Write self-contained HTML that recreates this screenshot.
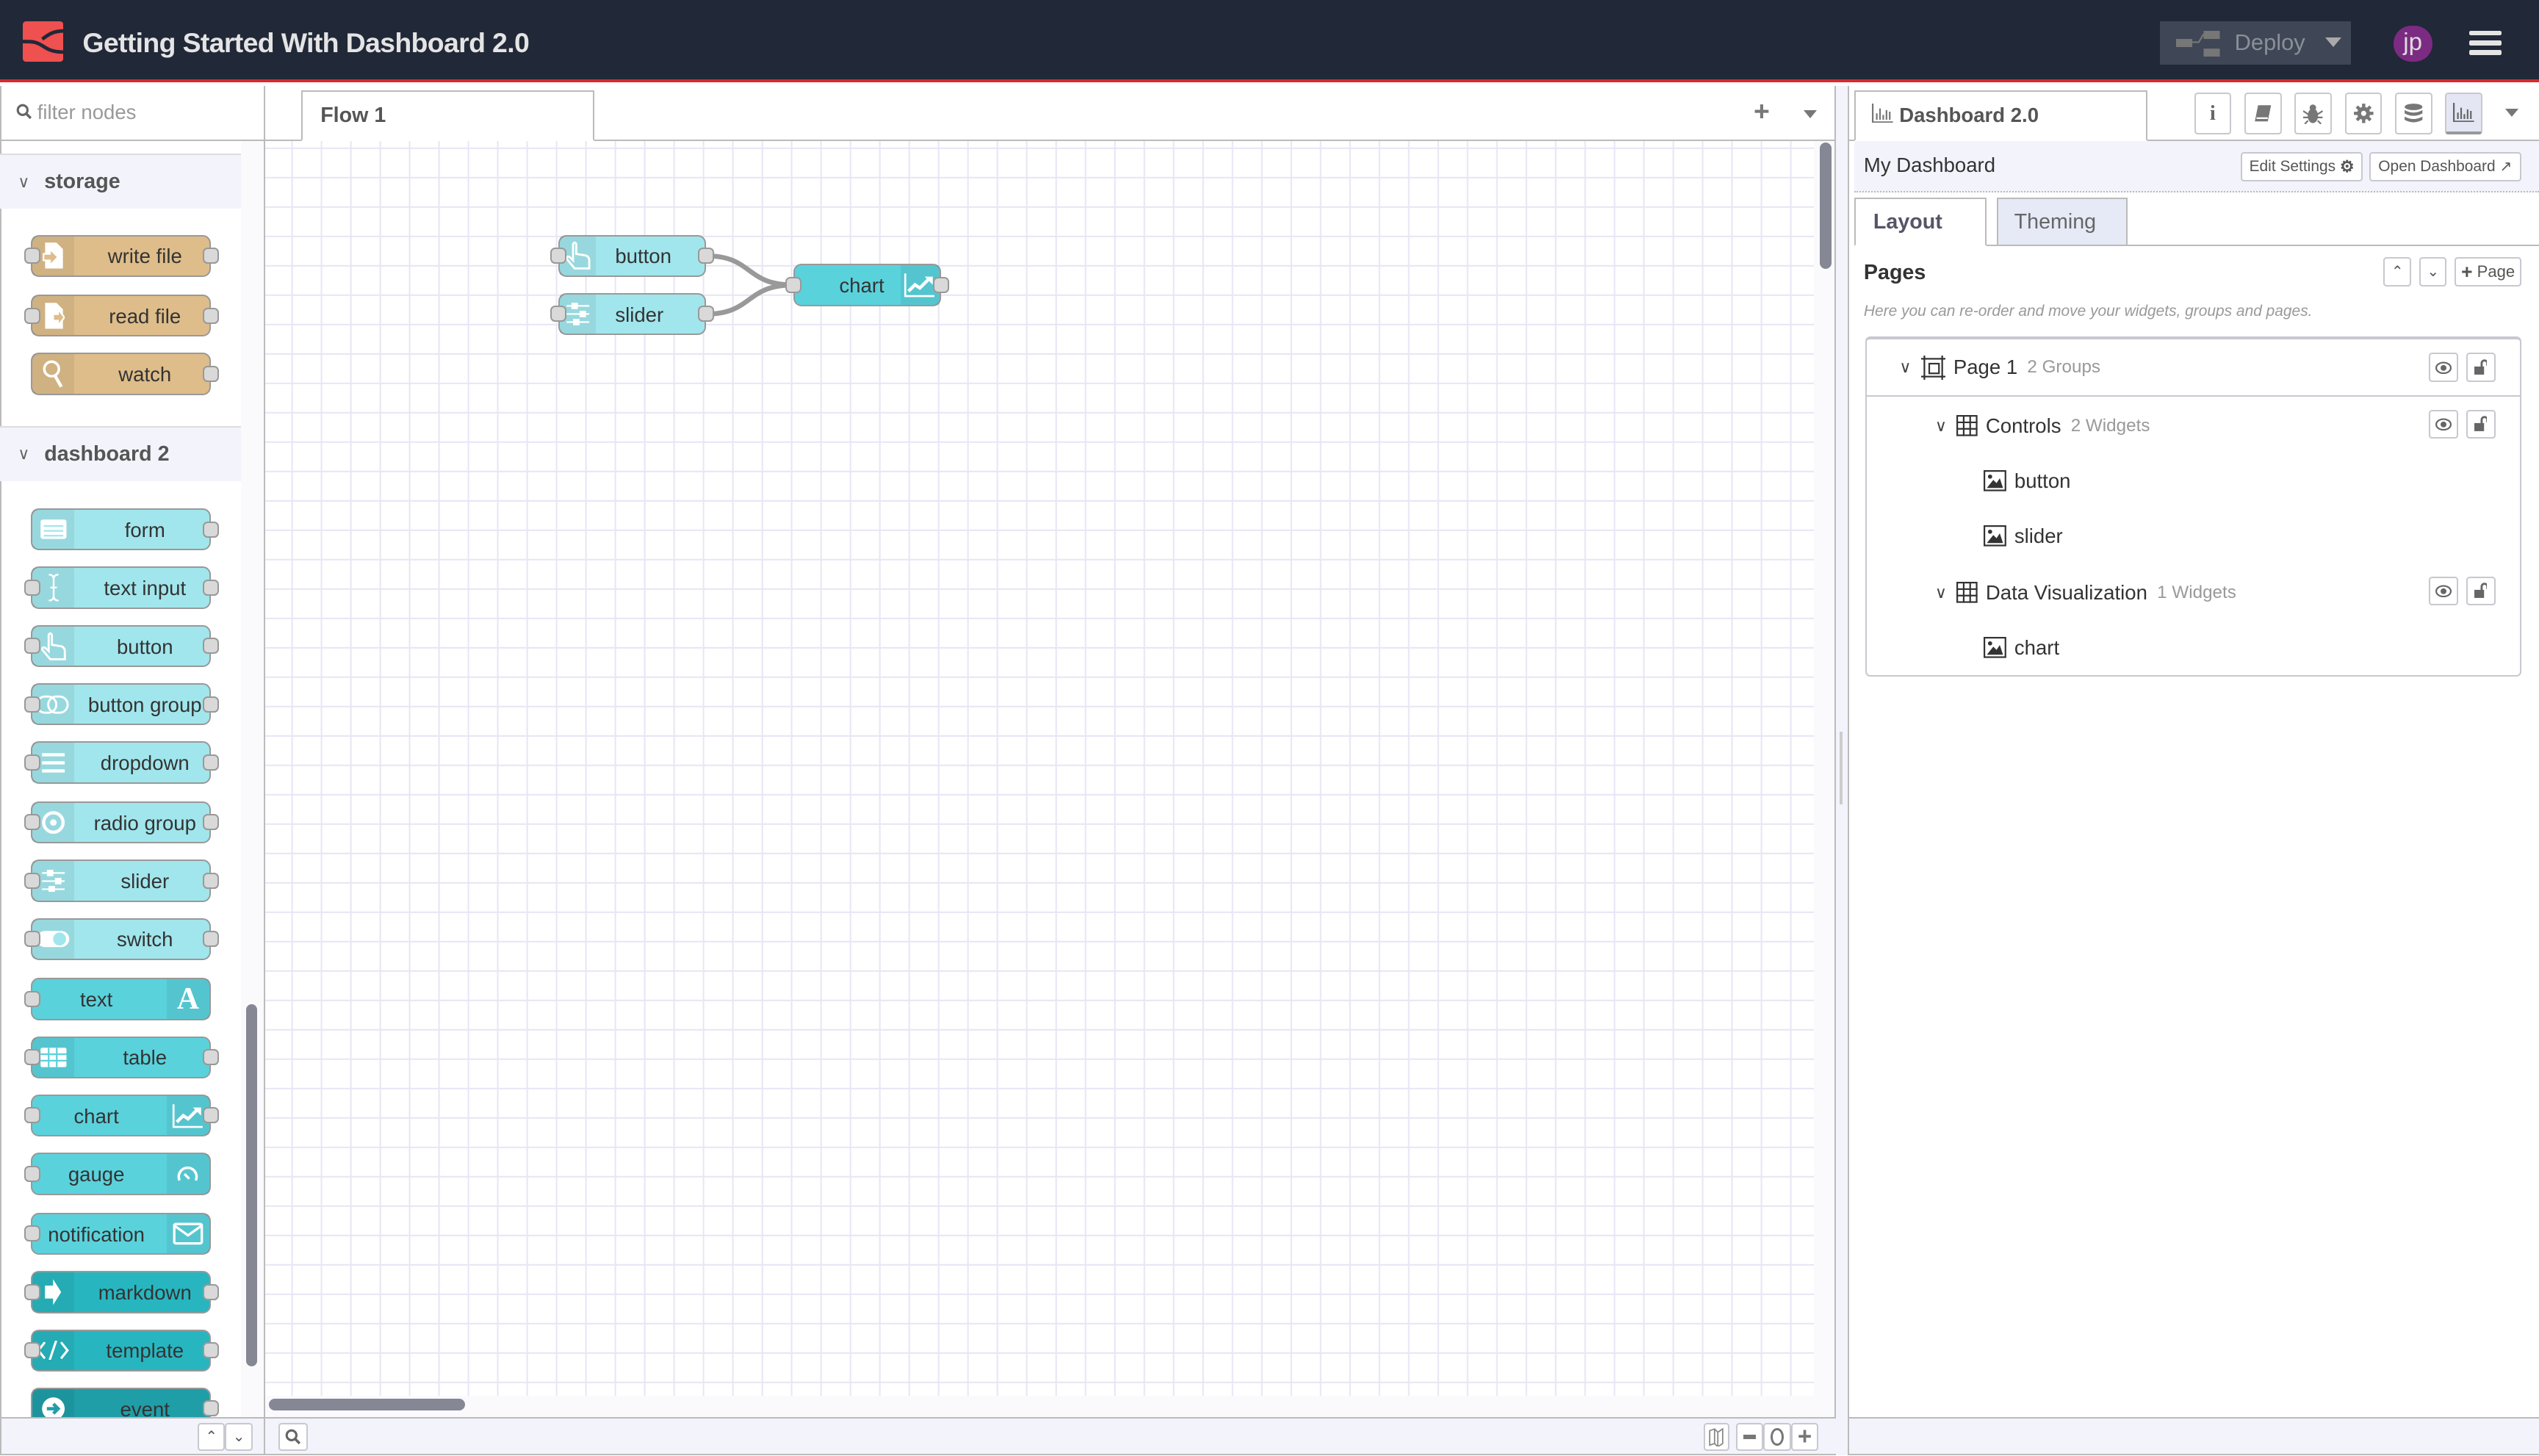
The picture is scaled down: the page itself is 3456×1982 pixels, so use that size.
<!DOCTYPE html>
<html><head><meta charset="utf-8"><style>
*{box-sizing:border-box;margin:0;padding:0}
html,body{width:3456px;height:1982px;overflow:hidden;background:#fff}
#w{zoom:2.2041;width:1568px;height:899px;position:relative;font-family:"Liberation Sans",Arial,sans-serif;color:#333;overflow:hidden}
.a{position:absolute}
.hdr{left:0;top:0;width:1568px;height:51px;background:#212837;border-bottom:2px solid #d9282e}
.n{position:absolute;width:111px;height:26px;border:1px solid #999;border-radius:5px;font-size:12.5px;color:#333}
.n .ic{position:absolute;top:0;bottom:0;width:26px;background:rgba(0,0,0,0.06);display:flex;align-items:center;justify-content:center}
.n .l{position:absolute;top:1px;bottom:0;display:flex;align-items:center;justify-content:center;white-space:nowrap}
.p{position:absolute;width:10px;height:10px;background:#d9d9d9;border:1px solid #999;border-radius:3px;top:7px}
.s{background:#debd8a}.c1{background:#a1e6ec}.c2{background:#5ad2dc}.c3{background:#27b6c0}.c4{background:#1f9ea7}
.cat{position:absolute;left:0;width:149px;height:34px;background:#f3f3fb;border-top:1px solid #ddd;font-size:13px;font-weight:bold;color:#555;display:flex;align-items:center}
.cat span{font-weight:normal;font-size:10px;margin:0 9px 0 11px;color:#666}
.btn{position:absolute;border:1px solid #c8c8d0;border-radius:2px;background:#fff;display:flex;align-items:center;justify-content:center;font-size:9px;color:#555}
.row{position:absolute;left:0;right:0;display:flex;align-items:center;font-size:12.5px;color:#333}
.gray{color:#999;font-size:11px;margin-left:6px}
.eb{position:absolute;width:18px;height:18px;border:1px solid #c8c8d0;border-radius:2px;display:flex;align-items:center;justify-content:center}
</style></head><body><div id="w">
<!-- header -->
<div class="a hdr"></div>
<svg class="a" style="left:14px;top:13px" width="25" height="25" viewBox="0 0 25 25"><rect width="25" height="25" rx="2" fill="#ef5050"/><path d="M0 12.5 C6 12.5 8 12.5 12 15 C15 17 18 19 25 19 M25 6 C18 6 15 9 12 11" stroke="#212837" stroke-width="2.2" fill="none"/></svg>
<div class="a" style="left:51px;top:17px;font-size:17px;color:#e4e4e4;font-weight:bold;letter-spacing:-0.3px">Getting Started With Dashboard 2.0</div>
<div class="a" style="left:1334px;top:13px;width:118px;height:27px;background:#3f4756"></div>
<svg class="a" style="left:1344px;top:19px" width="28" height="16"><rect x="0" y="5" width="10" height="5" fill="#777"/><rect x="17" y="0" width="10" height="5" fill="#777"/><rect x="17" y="11" width="10" height="5" fill="#777"/><path d="M10 7 L14 7 L17 2" stroke="#777" fill="none"/></svg>
<div class="a" style="left:1380px;top:18px;font-size:14px;color:#8a8f99">Deploy</div>
<div class="a" style="left:1436px;top:23px;width:0;height:0;border-left:5px solid transparent;border-right:5px solid transparent;border-top:6px solid #aaa"></div>
<div class="a" style="left:1478px;top:16px;width:24px;height:22px;border-radius:11px;background:#7b2b82;color:#ddd;font-size:15px;text-align:center;line-height:21px">jp</div>
<div class="a" style="left:1525px;top:19px;width:20px;height:3px;background:#e4e4e4;border-radius:1px"></div>
<div class="a" style="left:1525px;top:25px;width:20px;height:3px;background:#e4e4e4;border-radius:1px"></div>
<div class="a" style="left:1525px;top:31px;width:20px;height:3px;background:#e4e4e4;border-radius:1px"></div>

<!-- left palette -->
<div class="a" style="left:0;top:53px;width:164px;height:846px;border-right:1px solid #bbb;border-left:1px solid #bbb;background:#fff"></div>
<div class="a" style="left:1px;top:53px;width:162px;height:34px;border-bottom:1px solid #bbb"></div>
<svg class="a" style="left:10px;top:64px" width="10" height="10"><circle cx="4" cy="4" r="3" stroke="#666" stroke-width="1.4" fill="none"/><path d="M6 6 L9 9" stroke="#666" stroke-width="1.6"/></svg>
<div class="a" style="left:23px;top:62px;font-size:12.5px;color:#999">filter nodes</div>
<div class="a" style="left:149px;top:87px;width:14px;height:788px;background:#fafafd"></div>
<div class="a" style="left:152px;top:620px;width:7px;height:224px;background:#858894;border-radius:4px"></div>
<div class="cat" style="top:95px"><span>&#8744;</span>storage</div>
<div class="cat" style="top:263px"><span>&#8744;</span>dashboard 2</div>

<!-- storage nodes -->
<div class="n s" style="left:19px;top:145px"><div class="ic" style="left:0"><svg width="14" height="18"><path d="M2 1h7l4 4v12H2z" fill="#fff"/><path d="M1 8h4v-3l5 5-5 5v-3H1z" fill="#debd8a" stroke="#fff"/></svg></div><div class="l" style="left:30px;right:0">write file</div><div class="p" style="left:-5px"></div><div class="p" style="right:-6px"></div></div>
<div class="n s" style="left:19px;top:182px"><div class="ic" style="left:0"><svg width="14" height="18"><path d="M2 1h7l4 4v12H2z" fill="#fff"/><path d="M7 8h3v-3l4 5-4 5v-3H7z" fill="#debd8a" stroke="#fff"/></svg></div><div class="l" style="left:30px;right:0">read file</div><div class="p" style="left:-5px"></div><div class="p" style="right:-6px"></div></div>
<div class="n s" style="left:19px;top:218px"><div class="ic" style="left:0"><svg width="14" height="18"><circle cx="6" cy="6" r="4.5" stroke="#fff" stroke-width="1.6" fill="none"/><path d="M8 10 L12 17" stroke="#fff" stroke-width="2"/></svg></div><div class="l" style="left:30px;right:0">watch</div><div class="p" style="right:-6px"></div></div>

<!-- dashboard nodes -->
<div class="n c1" style="left:19px;top:314px"><div class="ic" style="left:0"><svg width="18" height="14"><rect x="1" y="1" width="16" height="12" rx="1.5" fill="#fff"/><path d="M3 5h12M3 8h12M3 11h12" stroke="#a1e6ec"/></svg></div><div class="l" style="left:30px;right:0">form</div><div class="p" style="right:-6px"></div></div>
<div class="n c1" style="left:19px;top:350px"><div class="ic" style="left:0"><svg width="10" height="18"><path d="M2 1 Q5 1 5 4 V14 Q5 17 2 17 M8 1 Q5 1 5 4 M5 14 Q5 17 8 17 M3 9h4" stroke="#fff" fill="none" stroke-width="1.1"/></svg></div><div class="l" style="left:30px;right:0">text input</div><div class="p" style="left:-5px"></div><div class="p" style="right:-6px"></div></div>
<div class="n c1" style="left:19px;top:386px"><div class="ic" style="left:0"><svg width="18" height="18"><path d="M6 2 Q7 0 8 2 V8 L14 9 Q16 10 16 12 V17 H7 L2 11 Q2 9 4 10 L6 12 Z" stroke="#fff" stroke-width="1.3" fill="none"/></svg></div><div class="l" style="left:30px;right:0">button</div><div class="p" style="left:-5px"></div><div class="p" style="right:-6px"></div></div>
<div class="n c1" style="left:19px;top:422px"><div class="ic" style="left:0"><svg width="22" height="12"><rect x="1" y="1" width="12" height="10" rx="5" stroke="#fff" fill="none" stroke-width="1.3"/><rect x="8" y="1" width="12" height="10" rx="5" stroke="#fff" fill="none" stroke-width="1.3"/></svg></div><div class="l" style="left:30px;right:0">button group</div><div class="p" style="left:-5px"></div><div class="p" style="right:-6px"></div></div>
<div class="n c1" style="left:19px;top:458px"><div class="ic" style="left:0"><svg width="16" height="14"><path d="M1 2h14M1 7h14M1 12h14" stroke="#fff" stroke-width="2"/></svg></div><div class="l" style="left:30px;right:0">dropdown</div><div class="p" style="left:-5px"></div><div class="p" style="right:-6px"></div></div>
<div class="n c1" style="left:19px;top:495px"><div class="ic" style="left:0"><svg width="16" height="16"><circle cx="8" cy="8" r="6" stroke="#fff" stroke-width="2" fill="none"/><circle cx="8" cy="8" r="2" fill="#fff"/></svg></div><div class="l" style="left:30px;right:0">radio group</div><div class="p" style="left:-5px"></div><div class="p" style="right:-6px"></div></div>
<div class="n c1" style="left:19px;top:531px"><div class="ic" style="left:0"><svg width="16" height="14"><path d="M1 2h14M1 7h14M1 12h14" stroke="#fff"/><rect x="4" y="0" width="4" height="4" fill="#fff"/><rect x="9" y="5" width="4" height="4" fill="#fff"/><rect x="5" y="10" width="4" height="4" fill="#fff"/></svg></div><div class="l" style="left:30px;right:0">slider</div><div class="p" style="left:-5px"></div><div class="p" style="right:-6px"></div></div>
<div class="n c1" style="left:19px;top:567px"><div class="ic" style="left:0"><svg width="22" height="12"><rect x="1" y="1" width="20" height="10" rx="5" fill="#fff"/><circle cx="15" cy="6" r="4" fill="#a1e6ec"/></svg></div><div class="l" style="left:30px;right:0">switch</div><div class="p" style="left:-5px"></div><div class="p" style="right:-6px"></div></div>
<div class="n c2" style="left:19px;top:604px"><div class="l" style="left:0;right:30px">text</div><div class="ic" style="right:0"><span style="font-family:'Liberation Serif',serif;font-size:19px;font-weight:bold;color:#fff">A</span></div><div class="p" style="left:-5px"></div></div>
<div class="n c2" style="left:19px;top:640px"><div class="ic" style="left:0"><svg width="18" height="14"><rect x="1" y="1" width="16" height="12" rx="1" fill="#fff"/><path d="M1 5h16M1 9h16M6 1v12M11 1v12" stroke="#5ad2dc"/></svg></div><div class="l" style="left:30px;right:0">table</div><div class="p" style="left:-5px"></div><div class="p" style="right:-6px"></div></div>
<div class="n c2" style="left:19px;top:676px"><div class="l" style="left:0;right:30px">chart</div><div class="ic" style="right:0"><svg width="20" height="16"><path d="M1 1V15H19" stroke="#fff" stroke-width="1.2" fill="none"/><path d="M3 12 L7 8 L10 10 L16 4" stroke="#fff" stroke-width="2" fill="none"/><path d="M13 3h5v5z" fill="#fff"/></svg></div><div class="p" style="left:-5px"></div><div class="p" style="right:-6px"></div></div>
<div class="n c2" style="left:19px;top:712px"><div class="l" style="left:0;right:30px">gauge</div><div class="ic" style="right:0"><svg width="14" height="10"><path d="M2 9 A5.5 5.5 0 1 1 12 9" stroke="#fff" stroke-width="1.6" fill="none"/><path d="M5 5 L8 8" stroke="#fff" stroke-width="1.5"/></svg></div><div class="p" style="left:-5px"></div></div>
<div class="n c2" style="left:19px;top:749px"><div class="l" style="left:0;right:30px">notification</div><div class="ic" style="right:0"><svg width="19" height="14"><rect x="1" y="1" width="17" height="12" rx="1" stroke="#fff" stroke-width="1.5" fill="none"/><path d="M1 2 L9.5 8 L18 2" stroke="#fff" stroke-width="1.5" fill="none"/></svg></div><div class="p" style="left:-5px"></div></div>
<div class="n c3" style="left:19px;top:785px"><div class="ic" style="left:0"><svg width="12" height="18"><path d="M1 5h5V1l5 8-5 8v-4H1z" fill="#fff"/></svg></div><div class="l" style="left:30px;right:0">markdown</div><div class="p" style="left:-5px"></div><div class="p" style="right:-6px"></div></div>
<div class="n c3" style="left:19px;top:821px"><div class="ic" style="left:0"><svg width="20" height="12"><path d="M5 1 L1 6 L5 11 M15 1 L19 6 L15 11 M12 0 L8 12" stroke="#fff" stroke-width="1.4" fill="none"/></svg></div><div class="l" style="left:30px;right:0">template</div><div class="p" style="left:-5px"></div><div class="p" style="right:-6px"></div></div>
<div class="n c4" style="left:19px;top:857px"><div class="ic" style="left:0"><svg width="16" height="16"><circle cx="8" cy="8" r="7" fill="#fff"/><path d="M4 8h7M8 5l3 3-3 3" stroke="#1f9ea7" stroke-width="2" fill="none"/></svg></div><div class="l" style="left:30px;right:0">event</div><div class="p" style="right:-6px"></div></div>

<!-- left bottom bar -->
<div class="a" style="left:0;top:875px;width:164px;height:24px;background:#f3f3fb;border:1px solid #bbb"></div>
<div class="btn" style="left:122px;top:879px;width:17px;height:17px;font-size:9px">&#8963;</div>
<div class="btn" style="left:139px;top:879px;width:17px;height:17px;font-size:9px">&#8964;</div>

<!-- canvas -->
<div class="a" style="left:164px;top:53px;width:970px;height:34px;border-bottom:1px solid #bbb;background:#fff"></div>
<div class="a" style="left:186px;top:56px;width:181px;height:31px;border:1px solid #bbb;border-bottom:1px solid #fff;background:#fff;font-size:13px;font-weight:bold;color:#555;padding:7px 0 0 11px">Flow 1</div>
<div class="a" style="left:1083px;top:59px;font-size:17px;font-weight:bold;color:#777">+</div>
<div class="a" style="left:1114px;top:68px;border-left:4.5px solid transparent;border-right:4.5px solid transparent;border-top:5px solid #777"></div>
<div class="a" style="left:164px;top:87px;width:956px;height:775px;background-color:#fff;background-image:linear-gradient(#e6e6f5 1px,transparent 1px),linear-gradient(90deg,#e6e6f5 1px,transparent 1px);background-size:18.15px 18.15px;background-position:-2px 4px"></div>
<div class="a" style="left:1120px;top:87px;width:13px;height:788px;background:#fafafd"></div>
<div class="a" style="left:164px;top:862px;width:956px;height:13px;background:#fafafd"></div>
<div class="a" style="left:1124px;top:88px;width:7px;height:78px;background:#858894;border-radius:4px"></div>
<div class="a" style="left:166px;top:864px;width:121px;height:7px;background:#858894;border-radius:4px"></div>
<div class="a" style="left:1133px;top:53px;width:9px;height:846px;background:#f3f3fb;border-left:1px solid #bbb;border-right:1px solid #bbb"></div>
<div class="a" style="left:1136px;top:452px;width:2px;height:45px;background:#ccc"></div>

<!-- canvas wires & nodes -->
<svg class="a" style="left:0;top:0" width="1568" height="899"><path d="M436 158 C465 158 460 176 490 176 M436 194 C465 194 460 176 490 176" stroke="#999" stroke-width="3" fill="none"/></svg>
<div class="n c1" style="left:345px;top:145px;width:91px"><div class="ic" style="left:0;width:22px"><svg width="16" height="18"><path d="M5 2 Q6 0 7 2 V8 L13 9 Q15 10 15 12 V17 H6 L1 11 Q1 9 3 10 L5 12 Z" stroke="#fff" stroke-width="1.3" fill="none"/></svg></div><div class="l" style="left:22px;right:0;justify-content:flex-start;padding-left:12px">button</div><div class="p" style="left:-6px"></div><div class="p" style="right:-6px"></div></div>
<div class="n c1" style="left:345px;top:181px;width:91px"><div class="ic" style="left:0;width:22px"><svg width="16" height="14"><path d="M1 2h14M1 7h14M1 12h14" stroke="#fff"/><rect x="4" y="0" width="4" height="4" fill="#fff"/><rect x="9" y="5" width="4" height="4" fill="#fff"/><rect x="5" y="10" width="4" height="4" fill="#fff"/></svg></div><div class="l" style="left:22px;right:0;justify-content:flex-start;padding-left:12px">slider</div><div class="p" style="left:-6px"></div><div class="p" style="right:-6px"></div></div>
<div class="n c2" style="left:490px;top:163px;width:91px"><div class="l" style="left:0;right:22px;justify-content:flex-end;padding-right:12px">chart</div><div class="ic" style="right:0;width:24px"><svg width="20" height="16"><path d="M1 1V15H19" stroke="#fff" stroke-width="1.2" fill="none"/><path d="M3 12 L7 8 L10 10 L16 4" stroke="#fff" stroke-width="2" fill="none"/><path d="M13 3h5v5z" fill="#fff"/></svg></div><div class="p" style="left:-6px"></div><div class="p" style="right:-6px"></div></div>

<!-- canvas bottom bar -->
<div class="a" style="left:164px;top:875px;width:970px;height:24px;background:#f3f3fb;border-top:1px solid #bbb;border-bottom:1px solid #bbb"></div>
<div class="btn" style="left:172px;top:879px;width:18px;height:17px"><svg width="10" height="10"><circle cx="4" cy="4" r="3" stroke="#666" stroke-width="1.4" fill="none"/><path d="M6 6 L9 9" stroke="#666" stroke-width="1.6"/></svg></div>
<div class="btn" style="left:1052px;top:879px;width:16px;height:17px"><svg width="10" height="12"><path d="M1 2 L4 1 L6 3 L9 1 V10 L6 12 L4 10 L1 11Z M4 1V10 M6 3V12" stroke="#888" stroke-width="0.8" fill="none"/></svg></div>
<div class="btn" style="left:1072px;top:879px;width:17px;height:17px"><div style="width:8px;height:2.5px;background:#777"></div></div>
<div class="btn" style="left:1089px;top:879px;width:17px;height:17px"><div style="width:8px;height:11px;border:1.5px solid #777;border-radius:50%"></div></div>
<div class="btn" style="left:1106px;top:879px;width:17px;height:17px;font-size:15px;font-weight:bold;color:#777">+</div>

<!-- right sidebar -->
<div class="a" style="left:1142px;top:53px;width:426px;height:34px;border-bottom:1px solid #bbb"></div>
<div class="a" style="left:1145px;top:56px;width:181px;height:31px;border:1px solid #bbb;border-bottom:1px solid #fff;background:#fff;font-size:12.5px;font-weight:bold;color:#555;padding:7px 0 0 27px">Dashboard 2.0</div>
<svg class="a" style="left:1156px;top:64px" width="13" height="12"><path d="M0.5 0V11.5H13M3 10V6M5 10V3M7 10V7M9 10V4M11 10V5" stroke="#777" stroke-width="1" fill="none"/></svg>
<div class="btn" style="left:1355px;top:57px;width:23px;height:26px;font-size:13px;font-weight:bold;color:#666;font-family:'Liberation Serif',serif">i</div>
<div class="btn" style="left:1386px;top:57px;width:23px;height:26px"><svg width="12" height="12"><path d="M3 1h8L9 11H1z" fill="#777"/><path d="M2 9h7" stroke="#fff"/></svg></div>
<div class="btn" style="left:1417px;top:57px;width:23px;height:26px"><svg width="12" height="13"><ellipse cx="6" cy="8" rx="3.2" ry="4.5" fill="#777"/><circle cx="6" cy="3" r="2" fill="#777"/><path d="M0 5l3 2M12 5l-3 2M0 9h3M12 9H9M1 13l2-2M11 13l-2-2" stroke="#777"/></svg></div>
<div class="btn" style="left:1448px;top:57px;width:23px;height:26px"><svg width="13" height="13"><circle cx="6.5" cy="6.5" r="4" fill="#777"/><path d="M6.5 0.5v12M0.5 6.5h12M2.3 2.3l8.4 8.4M10.7 2.3l-8.4 8.4" stroke="#777" stroke-width="2"/><circle cx="6.5" cy="6.5" r="1.6" fill="#fff"/></svg></div>
<div class="btn" style="left:1479px;top:57px;width:23px;height:26px"><svg width="12" height="13"><ellipse cx="6" cy="2.5" rx="5.5" ry="2" fill="#777"/><path d="M0.5 4.5 Q6 7.5 11.5 4.5V6.5Q6 9.5 0.5 6.5ZM0.5 8.5Q6 11.5 11.5 8.5V10.5Q6 13.5 0.5 10.5Z" fill="#777"/></svg></div>
<div class="btn" style="left:1510px;top:57px;width:23px;height:26px;background:#e4e6f4;border-bottom:2px solid #999"><svg width="13" height="12"><path d="M0.5 0V11.5H13M3 10V6M5 10V3M7 10V7M9 10V4M11 10V5" stroke="#666" stroke-width="1" fill="none"/></svg></div>
<div class="a" style="left:1547px;top:67px;border-left:4.5px solid transparent;border-right:4.5px solid transparent;border-top:5px solid #777"></div>

<div class="a" style="left:1145px;top:87px;width:423px;height:32px;background:#f3f3fb;border-bottom:1px dotted #bbb"></div>
<div class="a" style="left:1151px;top:95px;font-size:12.5px;color:#333">My Dashboard</div>
<div class="btn" style="left:1384px;top:94px;width:75px;height:18px;font-size:9.5px">Edit Settings&nbsp;<b style="font-size:10px">&#9881;</b></div>
<div class="btn" style="left:1463px;top:94px;width:94px;height:18px;font-size:9.5px">Open Dashboard&nbsp;<span style="font-size:9px">&#8599;</span></div>

<div class="a" style="left:1145px;top:151px;width:423px;height:1px;background:#bbb"></div>
<div class="a" style="left:1145px;top:122px;width:82px;height:30px;border:1px solid #bbb;border-bottom:1px solid #fff;background:#fff;font-size:13px;font-weight:bold;color:#556;padding:7px 0 0 11px">Layout</div>
<div class="a" style="left:1233px;top:122px;width:81px;height:29px;border:1px solid #bbb;border-bottom:none;background:#e6e9f6;font-size:13px;color:#666;padding:7px 0 0 10px">Theming</div>

<div class="a" style="left:1151px;top:161px;font-size:13px;font-weight:bold;color:#333">Pages</div>
<div class="btn" style="left:1472px;top:159px;width:17px;height:18px">&#8963;</div>
<div class="btn" style="left:1494px;top:159px;width:17px;height:18px">&#8964;</div>
<div class="btn" style="left:1516px;top:159px;width:41px;height:18px;font-size:10px"><b style="font-size:12px">+</b>&nbsp;Page</div>
<div class="a" style="left:1151px;top:187px;font-size:9.5px;font-style:italic;color:#999">Here you can re-order and move your widgets, groups and pages.</div>

<div class="a" style="left:1152px;top:208px;width:405px;height:210px;border:1px solid #c8c8d0;border-top:2px solid #c8c8d0;border-radius:3px"></div>
<div class="a" style="left:1153px;top:244px;width:403px;height:1px;background:#c8c8d0"></div>
<div class="row" style="left:1173px;top:218px;height:18px"><span style="font-size:10px;color:#444;margin-right:6px">&#8744;</span><svg width="15" height="15" style="margin-right:5px"><rect x="2" y="2" width="11" height="11" stroke="#333" fill="none"/><rect x="5" y="5" width="6" height="6" stroke="#333" fill="none"/><path d="M0 2h3M12 2h3M0 13h3M12 13h3M2 0v3M13 0v3M2 12v3M13 12v3" stroke="#333"/></svg>Page 1<span class="gray">2 Groups</span></div>
<div class="row" style="left:1195px;top:254px;height:18px"><span style="font-size:10px;color:#444;margin-right:6px">&#8744;</span><svg width="13" height="13" style="margin-right:5px"><rect x="0.5" y="0.5" width="12" height="12" stroke="#333" fill="none"/><path d="M0 4.5h13M0 8.5h13M4.5 0v13M8.5 0v13" stroke="#333"/></svg>Controls<span class="gray">2 Widgets</span></div>
<div class="row" style="left:1225px;top:288px;height:18px"><svg width="14" height="13" style="margin-right:5px"><rect x="0.5" y="0.5" width="13" height="12" stroke="#333" fill="none"/><path d="M2 11 L6 6 L8 8 L10 5 L12 11Z" fill="#333"/><circle cx="4" cy="4" r="1.3" fill="#333"/></svg>button</div>
<div class="row" style="left:1225px;top:322px;height:18px"><svg width="14" height="13" style="margin-right:5px"><rect x="0.5" y="0.5" width="13" height="12" stroke="#333" fill="none"/><path d="M2 11 L6 6 L8 8 L10 5 L12 11Z" fill="#333"/><circle cx="4" cy="4" r="1.3" fill="#333"/></svg>slider</div>
<div class="row" style="left:1195px;top:357px;height:18px"><span style="font-size:10px;color:#444;margin-right:6px">&#8744;</span><svg width="13" height="13" style="margin-right:5px"><rect x="0.5" y="0.5" width="12" height="12" stroke="#333" fill="none"/><path d="M0 4.5h13M0 8.5h13M4.5 0v13M8.5 0v13" stroke="#333"/></svg>Data Visualization<span class="gray">1 Widgets</span></div>
<div class="row" style="left:1225px;top:391px;height:18px"><svg width="14" height="13" style="margin-right:5px"><rect x="0.5" y="0.5" width="13" height="12" stroke="#333" fill="none"/><path d="M2 11 L6 6 L8 8 L10 5 L12 11Z" fill="#333"/><circle cx="4" cy="4" r="1.3" fill="#333"/></svg>chart</div>

<div class="eb" style="left:1500px;top:218px"><svg width="10" height="8"><ellipse cx="5" cy="4" rx="4.5" ry="3.3" stroke="#666" fill="none"/><circle cx="5" cy="4" r="1.8" fill="#666"/></svg></div>
<div class="eb" style="left:1523px;top:218px"><svg width="8" height="10"><rect x="0" y="4.5" width="6" height="5" fill="#666"/><path d="M4.5 5V2.5A1.7 1.7 0 0 1 8 2.5V4" stroke="#666" fill="none" stroke-width="1.3"/></svg></div>
<div class="eb" style="left:1500px;top:253px"><svg width="10" height="8"><ellipse cx="5" cy="4" rx="4.5" ry="3.3" stroke="#666" fill="none"/><circle cx="5" cy="4" r="1.8" fill="#666"/></svg></div>
<div class="eb" style="left:1523px;top:253px"><svg width="8" height="10"><rect x="0" y="4.5" width="6" height="5" fill="#666"/><path d="M4.5 5V2.5A1.7 1.7 0 0 1 8 2.5V4" stroke="#666" fill="none" stroke-width="1.3"/></svg></div>
<div class="eb" style="left:1500px;top:356px"><svg width="10" height="8"><ellipse cx="5" cy="4" rx="4.5" ry="3.3" stroke="#666" fill="none"/><circle cx="5" cy="4" r="1.8" fill="#666"/></svg></div>
<div class="eb" style="left:1523px;top:356px"><svg width="8" height="10"><rect x="0" y="4.5" width="6" height="5" fill="#666"/><path d="M4.5 5V2.5A1.7 1.7 0 0 1 8 2.5V4" stroke="#666" fill="none" stroke-width="1.3"/></svg></div>

<div class="a" style="left:1142px;top:875px;width:426px;height:24px;background:#f3f3fb;border-top:1px solid #bbb;border-bottom:1px solid #bbb"></div>
</div></body></html>
